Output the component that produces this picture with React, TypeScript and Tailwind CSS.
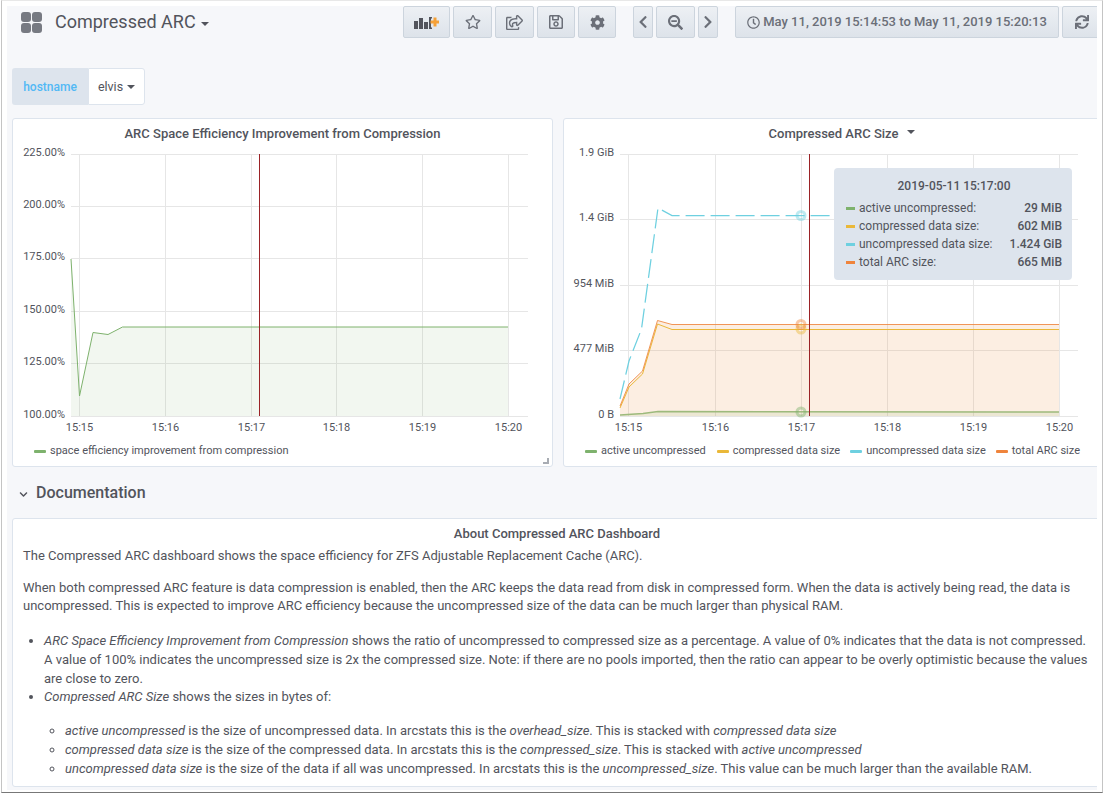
import type { ReactNode } from "react";
import {
  FaChevronDown,
  FaChevronLeft,
  FaChevronRight,
  FaCog,
  FaRegClock,
  FaRegSave,
  FaRegShareSquare,
  FaRegStar,
  FaSearchMinus,
  FaSync,
} from "react-icons/fa";

const axisText = "#52545c";
const gridLine = "#e6e6e6";
const cursorLine = "#9b2226";

function ToolbarButton({ width, children }: { width: string; children: ReactNode }) {
  return (
    <button
      type="button"
      className={`${width} h-[32px] shrink-0 flex items-center justify-center rounded-[2px] border border-[#ccd4dd] bg-gradient-to-b from-[#edf0f4] to-[#dde3ea] text-[#6b6f78]`}
    >
      {children}
    </button>
  );
}

function AddPanelIcon() {
  return (
    <svg width="25" height="13" viewBox="0 0 25 13">
      <rect x="0" y="5" width="4" height="8" fill="#52545c" />
      <rect x="5" y="2" width="4" height="11" fill="#52545c" />
      <rect x="10" y="6" width="4" height="7" fill="#52545c" />
      <path d="M15 1h3v1.5h-1v9h1v1.5h-3z" fill="#52545c" />
      <path d="M19.5 1.5h3v3h2.5v3h-2.5v3h-3v-3h-3v-3h3z" fill="#f5a138" />
    </svg>
  );
}

function DashboardIcon() {
  return (
    <div className="grid grid-cols-2 gap-[1px] w-[21px] h-[21px]">
      <div className="rounded-[3px] bg-[#777a82]" />
      <div className="rounded-[3px] bg-[#777a82]" />
      <div className="rounded-[3px] bg-[#777a82]" />
      <div className="rounded-[3px] bg-[#777a82]" />
    </div>
  );
}

function Caret() {
  return <span className="inline-block w-0 h-0 border-x-[4px] border-x-transparent border-t-[4px] border-t-[#52545c]" />;
}

function Header() {
  return (
    <div className="flex items-start h-[62px] pl-[14px] pt-0 shrink-0">
      <div className="w-[21px] shrink-0 mt-[6px]">
        <DashboardIcon />
      </div>
      <div className="ml-[13px] mt-[2px] flex items-center w-[348px] shrink-0 text-[18px] leading-[28px] text-[#52545c]">
        Compressed ARC
        <span className="ml-[5px] mt-[4px] flex">
          <Caret />
        </span>
      </div>
      <div className="flex gap-[3px] shrink-0">
        <ToolbarButton width="w-[47px]">
          <AddPanelIcon />
        </ToolbarButton>
        <ToolbarButton width="w-[39px]">
          <FaRegStar size={16} />
        </ToolbarButton>
        <ToolbarButton width="w-[39px]">
          <FaRegShareSquare size={17} />
        </ToolbarButton>
        <ToolbarButton width="w-[38px]">
          <FaRegSave size={16} />
        </ToolbarButton>
        <ToolbarButton width="w-[38px]">
          <FaCog size={15} />
        </ToolbarButton>
      </div>
      <div className="flex gap-[3px] ml-[17px] shrink-0">
        <ToolbarButton width="w-[20px]">
          <FaChevronLeft size={14} />
        </ToolbarButton>
        <ToolbarButton width="w-[39px]">
          <FaSearchMinus size={15} />
        </ToolbarButton>
        <ToolbarButton width="w-[20px]">
          <FaChevronRight size={14} />
        </ToolbarButton>
      </div>
      <div className="flex gap-[3px] ml-[17px] shrink-0">
        <ToolbarButton width="w-[324px]">
          <span className="flex items-center gap-[3px] text-[13px] font-medium text-[#6b6f78] whitespace-nowrap">
            <FaRegClock size={13} />
            May 11, 2019 15:14:53 to May 11, 2019 15:20:13
          </span>
        </ToolbarButton>
        <ToolbarButton width="w-[39px]">
          <FaSync size={14} />
        </ToolbarButton>
      </div>
    </div>
  );
}

function VariableRow() {
  return (
    <div className="flex ml-[5px] h-[37px] shrink-0 text-[12.5px]">
      <div className="w-[76px] pt-[1px] flex items-center justify-center rounded-l-[3px] bg-[#dde4ed] text-[12px] font-medium text-[#52b9f5]">
        hostname
      </div>
      <div className="w-[57px] pt-[1px] flex items-center justify-center gap-[4px] rounded-r-[3px] border border-[#dde4ed] bg-white text-[#52545c]">
        elvis
        <Caret />
      </div>
    </div>
  );
}

function Legend({ items, className }: { items: { color: string; label: string; gap: string }[]; className: string }) {
  return (
    <div className={`flex items-center text-[11px] text-[#52545c] whitespace-nowrap ${className}`}>
      {items.map((item) => (
        <div key={item.label} className={`flex items-center ${item.gap}`}>
          <span className="w-[12px] h-[3px] rounded-[1px] mr-[4px]" style={{ backgroundColor: item.color }} />
          {item.label}
        </div>
      ))}
    </div>
  );
}

function EfficiencyChart() {
  const hLines = [
    { y: 153.5, label: "225.00%" },
    { y: 205.5, label: "200.00%" },
    { y: 257.5, label: "175.00%" },
    { y: 310.5, label: "150.00%" },
    { y: 362.5, label: "125.00%" },
    { y: 415.5, label: "100.00%" },
  ];
  const vLines = [
    { x: 79.5, label: "15:15" },
    { x: 165.5, label: "15:16" },
    { x: 251.5, label: "15:17" },
    { x: 336.5, label: "15:18" },
    { x: 422.5, label: "15:19" },
    { x: 508.5, label: "15:20" },
  ];
  return (
    <svg width="539" height="291" viewBox="13 144 539 291" className="block font-['Roboto',sans-serif]">
      {hLines.map((l) => (
        <g key={l.label}>
          <line x1="71" x2="528" y1={l.y} y2={l.y} stroke={gridLine} />
          <text x="65" y={l.y + 1.5} textAnchor="end" fontSize="11" fill={axisText}>
            {l.label}
          </text>
        </g>
      ))}
      {vLines.map((l) => (
        <g key={l.label}>
          <line x1={l.x} x2={l.x} y1="153" y2="415" stroke={gridLine} />
          <text x={l.x} y="430" textAnchor="middle" fontSize="11" fill={axisText}>
            {l.label}
          </text>
        </g>
      ))}
      <path d="M71 258L79.5 395L93 331.5L108 333.5L122.5 326L508 326V415H71Z" fill="#7eb26d" fillOpacity="0.1" />
      <path d="M71 258L79.5 395L93 331.5L108 333.5L122.5 326L508 326" fill="none" stroke="#7eb26d" />
      <line x1="259.5" x2="259.5" y1="153" y2="415" stroke={cursorLine} />
    </svg>
  );
}

function SizeChart() {
  const hLines = [
    { y: 153.5, label: "1.9 GiB" },
    { y: 218.5, label: "1.4 GiB" },
    { y: 284.5, label: "954 MiB" },
    { y: 349.5, label: "477 MiB" },
    { y: 415.5, label: "0 B" },
  ];
  const vLines = [
    { x: 628.5, label: "15:15" },
    { x: 715.5, label: "15:16" },
    { x: 801.5, label: "15:17" },
    { x: 887.5, label: "15:18" },
    { x: 973.5, label: "15:19" },
    { x: 1059.5, label: "15:20" },
  ];
  const total = "M620 405L629 383L642.5 370L657.5 319.5L672 323.5L1059 323.5";
  const active = "M620 414L643 412.5L658 410.5L1059 411";
  return (
    <svg width="533" height="291" viewBox="564 144 533 291" className="block font-['Roboto',sans-serif]">
      {hLines.map((l) => (
        <g key={l.label}>
          <line x1="620" x2="1078" y1={l.y} y2={l.y} stroke={gridLine} />
          <text x="614" y={l.y + 1.5} textAnchor="end" fontSize="11" fill={axisText}>
            {l.label}
          </text>
        </g>
      ))}
      {vLines.map((l) => (
        <g key={l.label}>
          <line x1={l.x} x2={l.x} y1="153" y2="415" stroke={gridLine} />
          <text x={l.x} y="430" textAnchor="middle" fontSize="11" fill={axisText}>
            {l.label}
          </text>
        </g>
      ))}
      <path d={`${total}V415H620Z`} fill="#eb964b" fillOpacity="0.16" />
      <path d={`${active}V415H620Z`} fill="#7eb26d" fillOpacity="0.12" />
      <path d={active} fill="none" stroke="#9dba7c" strokeWidth="1.5" />
      <path d="M620 407L629 386L642.5 373L657.5 323L672 328.5L1059 328.5" fill="none" stroke="#eab839" />
      <path d={total} fill="none" stroke="#ef843c" strokeOpacity="0.85" />
      <path
        d="M620 398L629 360L641.5 328L658 207L672 214.5L1059 214.5"
        fill="none"
        stroke="#6ed0e0"
        strokeWidth="1.25"
        strokeDasharray="19 6"
      />
      <circle cx="801" cy="214.5" r="4" fill="none" stroke="#6ed0e0" strokeWidth="3" strokeOpacity="0.45" />
      <circle cx="801" cy="328" r="4" fill="none" stroke="#eab839" strokeWidth="3" strokeOpacity="0.45" />
      <circle cx="801" cy="323.5" r="4" fill="none" stroke="#ef843c" strokeWidth="3" strokeOpacity="0.45" />
      <circle cx="801" cy="411" r="4" fill="none" stroke="#7eb26d" strokeWidth="3" strokeOpacity="0.45" />
      <line x1="809.5" x2="809.5" y1="153" y2="415" stroke={cursorLine} />
    </svg>
  );
}

function Tooltip() {
  const rows = [
    { color: "#7eb26d", label: "active uncompressed:", value: "29 MiB" },
    { color: "#eab839", label: "compressed data size:", value: "602 MiB" },
    { color: "#6ed0e0", label: "uncompressed data size:", value: "1.424 GiB" },
    { color: "#ef843c", label: "total ARC size:", value: "665 MiB" },
  ];
  return (
    <div className="absolute left-[270px] top-[49px] w-[238px] h-[112px] rounded-[4px] bg-[#dde4ed] pl-[12px] pr-[10px] pt-[9px] text-[12px] text-[#52545c]">
      <div className="text-center font-medium leading-[18px] mb-[4px]">2019-05-11 15:17:00</div>
      {rows.map((row) => (
        <div key={row.label} className="flex items-center h-[18px]">
          <span className="w-[9px] h-[3px] mr-[4px]" style={{ backgroundColor: row.color }} />
          <span className="flex-1">{row.label}</span>
          <span className="font-medium">{row.value}</span>
        </div>
      ))}
    </div>
  );
}

function PanelTitle({ children }: { children: ReactNode }) {
  return (
    <div className="flex items-center justify-center h-[26px] pt-[3px] text-[13px] font-medium text-[#52545c]">
      {children}
    </div>
  );
}

function Documentation() {
  return (
    <div className="w-[1098px] h-[269px] ml-[5px] shrink-0 rounded-[3px] border border-[#dde4ed] bg-white pl-[10px] pr-[20px] pt-[6px] text-[13px] leading-[18.75px] text-[#52545c] overflow-hidden">
      <div className="w-[1068px] text-center font-medium">About Compressed ARC Dashboard</div>
      <p className="mb-[13px] mt-[3px]">
        The Compressed ARC dashboard shows the space efficiency for ZFS Adjustable Replacement Cache (ARC).
      </p>
      <p className="mb-[16px] w-[1060px]">
        When both compressed ARC feature is data compression is enabled, then the ARC keeps the data read from disk in
        compressed form. When the data is actively being read, the data is uncompressed. This is expected to improve
        ARC efficiency because the uncompressed size of the data can be much larger than physical RAM.
      </p>
      <ul className="list-disc pl-[21px]">
        <li>
          <em>ARC Space Efficiency Improvement from Compression</em> shows the ratio of uncompressed to compressed size
          as a percentage. A value of 0% indicates that the data is not compressed. A value of 100% indicates the
          uncompressed size is 2x the compressed size. Note: if there are no pools imported, then the ratio can appear
          to be overly optimistic because the values are close to zero.
        </li>
        <li>
          <em>Compressed ARC Size</em> shows the sizes in bytes of:
          <ul className="list-[circle] pl-[21px] mt-[15px]">
            <li>
              <em>active uncompressed</em> is the size of uncompressed data. In arcstats this is the{" "}
              <em>overhead_size</em>. This is stacked with <em>compressed data size</em>
            </li>
            <li>
              <em>compressed data size</em> is the size of the compressed data. In arcstats this is the{" "}
              <em>compressed_size</em>. This is stacked with <em>active uncompressed</em>
            </li>
            <li>
              <em>uncompressed data size</em> is the size of the data if all was uncompressed. In arcstats this is the{" "}
              <em>uncompressed_size</em>. This value can be much larger than the available RAM.
            </li>
          </ul>
        </li>
      </ul>
    </div>
  );
}

export default function App() {
  return (
    <div className="w-[1104px] h-[796px] bg-white font-['Roboto',sans-serif] overflow-hidden">
      <div className="ml-[1px] mr-[1px] h-[793px] border border-[#c4c4c4] border-t-[#e8e8e8] border-b-[#777] bg-white pl-[5px] pr-[5px] pt-[5px] pb-[2px]">
        <div className="flex flex-col h-full bg-[#f6f7fa] overflow-hidden">
          <Header />
          <VariableRow />
          <div className="flex gap-[10px] ml-[5px] mt-[13px] shrink-0">
            <div className="relative w-[541px] h-[349px] shrink-0 rounded-[3px] border border-[#dde4ed] bg-white">
              <PanelTitle>ARC Space Efficiency Improvement from Compression</PanelTitle>
              <EfficiencyChart />
              <Legend
                className="pl-[21px] mt-[2px] h-[26px]"
                items={[{ color: "#7eb26d", label: "space efficiency improvement from compression", gap: "" }]}
              />
              <span className="absolute right-[3px] bottom-[2px] w-[6px] h-[6px] border-r-2 border-b-2 border-[#a8acb3]" />
            </div>
            <div className="relative w-[541px] h-[349px] shrink-0 rounded-[3px] border border-[#dde4ed] bg-white">
              <PanelTitle>
                <span className="relative">
                  Compressed ARC Size
                  <span className="absolute left-full ml-[9px] top-[6px] flex">
                    <Caret />
                  </span>
                </span>
              </PanelTitle>
              <SizeChart />
              <Legend
                className="pl-[21px] mt-[2px] h-[26px]"
                items={[
                  { color: "#7eb26d", label: "active uncompressed", gap: "mr-[11px]" },
                  { color: "#eab839", label: "compressed data size", gap: "mr-[10px]" },
                  { color: "#6ed0e0", label: "uncompressed data size", gap: "mr-[10px]" },
                  { color: "#ef843c", label: "total ARC size", gap: "" },
                ]}
              />
              <Tooltip />
            </div>
          </div>
          <div className="flex items-center h-[51px] ml-[12px] shrink-0 text-[16px] font-medium text-[#52545c]">
            <FaChevronDown size={9} className="mt-[4px] mr-[8px]" />
            Documentation
          </div>
          <Documentation />
        </div>
      </div>
    </div>
  );
}
